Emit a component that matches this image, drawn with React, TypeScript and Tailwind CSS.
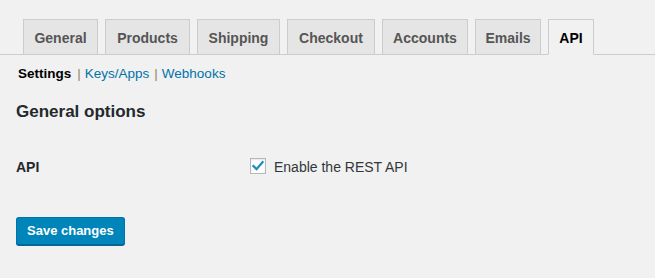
import { useState } from 'react';

// Tab labels with the widths they take in the admin screen
const tabs = [
  { label: 'General', width: 'w-[75px]' },
  { label: 'Products', width: 'w-[85px]' },
  { label: 'Shipping', width: 'w-[83px]' },
  { label: 'Checkout', width: 'w-[88px]' },
  { label: 'Accounts', width: 'w-[86px]' },
  { label: 'Emails', width: 'w-[66px]' },
  { label: 'API', width: 'w-[46px]' },
];

export default function App() {
  const [enabled, setEnabled] = useState(true);

  return (
    <div className="w-full h-[278px] bg-[#f1f1f1] text-[#23282d] font-['Liberation_Sans',Arial,sans-serif] overflow-hidden">
      {/* Tab strip */}
      <nav className="flex pl-4 pt-[19px] border-b border-[#ccc]">
        {tabs.map((tab) => {
          const active = tab.label === 'API';
          return (
            <a
              key={tab.label}
              href="#"
              className={`${tab.width} ml-[7px] text-center pt-[6px] pb-[4px] text-[14px] leading-6 font-bold border border-[#ccc] ${
                active
                  ? '-mb-px border-b-[#f1f1f1] bg-[#f1f1f1] text-black'
                  : 'border-b-0 bg-[#e5e5e5] text-[#555]'
              }`}
            >
              {tab.label}
            </a>
          );
        })}
      </nav>

      <div className="px-4">
        {/* Sub navigation */}
        <ul className="flex mt-[9px] pl-[2px] text-[13.5px] leading-5">
          <li className="font-bold text-black">Settings</li>
          <li className="text-[#94836a] ml-[6px]">
            |<a href="#" className="ml-[4px] text-[#0073aa]">Keys/Apps</a>
          </li>
          <li className="text-[#94836a] ml-[5px]">
            |<a href="#" className="ml-[4px] text-[#0073aa]">Webhooks</a>
          </li>
        </ul>

        <h2 className="mt-[17px] text-[17px] leading-[22px] font-bold">General options</h2>

        {/* Settings row */}
        <div className="flex mt-[34px] leading-5">
          <div className="w-[234px] text-[14px] font-bold">API</div>
          <label className="flex items-start gap-2 text-[14px] text-[#32373c] cursor-pointer">
            <span
              onClick={() => setEnabled(!enabled)}
              className="mt-px w-4 h-4 flex items-center justify-center bg-white border border-[#b4b9be] shadow-[inset_0_1px_2px_rgba(0,0,0,0.1)]"
            >
              {enabled && (
                <svg className="w-[14px] h-[14px]" viewBox="0 0 20 20" fill="none">
                  <path
                    d="M3.5 10l4.5 4.5 8.5-10"
                    stroke="#1e8cbe"
                    strokeWidth={3.2}
                    strokeLinecap="square"
                  />
                </svg>
              )}
            </span>
            Enable the REST API
          </label>
        </div>

        <button className="mt-[40px] h-7 px-[10px] text-[13px] leading-[26px] font-bold text-white bg-[#0085ba] border border-[#0073aa] border-b-[#006799] rounded-[3px] shadow-[0_1px_0_#006799]">
          Save changes
        </button>
      </div>
    </div>
  );
}
